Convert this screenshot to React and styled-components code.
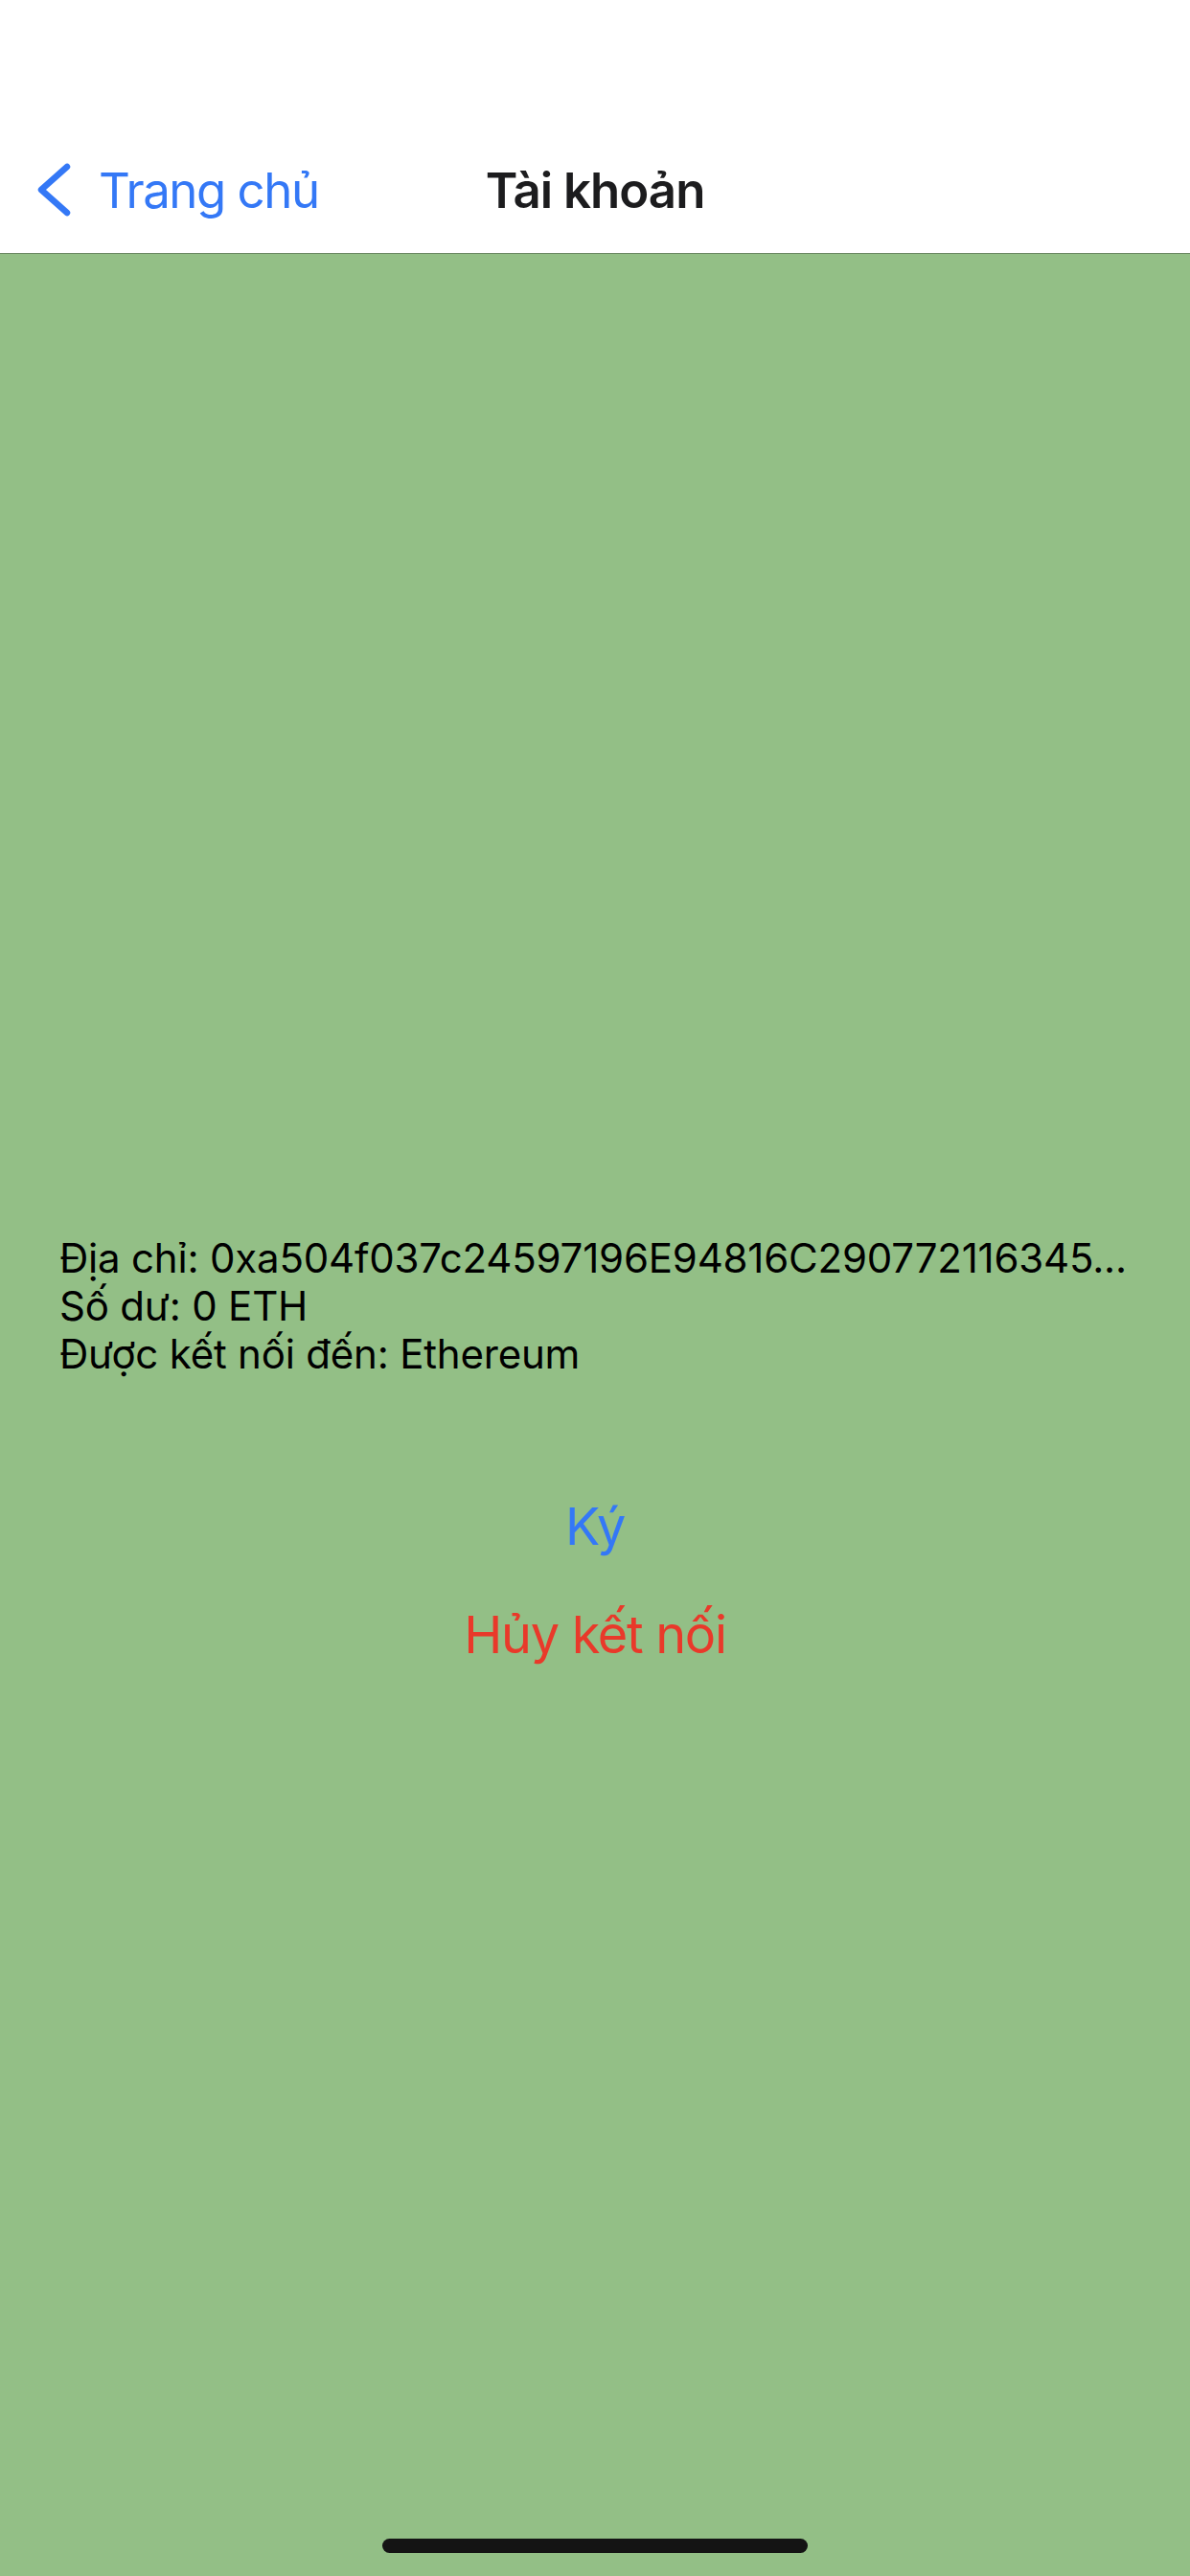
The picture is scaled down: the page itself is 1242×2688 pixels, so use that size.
import React from "react";
import styled, { createGlobalStyle } from "styled-components";

const GlobalStyle = createGlobalStyle`
  html, body { margin: 0; padding: 0; }
  body { font-family: "Inter", "Noto Sans", sans-serif; background: #93bf86; }
  #root { min-height: 100vh; }
`;

const Screen = styled.div`
  min-height: 100vh;
  display: flex;
  flex-direction: column;
  background: #93bf86;
`;

const Header = styled.header`
  background: #ffffff;
  padding-top: 132px;
  border-bottom: 1px solid #6b8862;
`;

const NavBar = styled.nav`
  height: 132px;
  display: grid;
  grid-template-columns: 1fr auto 1fr;
  align-items: center;
`;

const BackButton = styled.div`
  display: flex;
  align-items: center;
  gap: 29px;
  padding-left: 37px;
  color: #3478f6;
  font-size: 51px;
  letter-spacing: -1.5px;
`;

const Title = styled.h1`
  margin: 0;
  font-size: 51px;
  font-weight: 600;
  color: #1c1c1e;
  letter-spacing: -1px;
`;

const Body = styled.main`
  flex: 1;
  display: flex;
  flex-direction: column;
  padding-top: 1023px;
`;

const Info = styled.div`
  padding: 0 62px;
  display: flex;
  flex-direction: column;
`;

const InfoLine = styled.div`
  font-size: 42px;
  line-height: 50px;
  color: #000;
  white-space: nowrap;
  letter-spacing: -0.2px;
`;

const Actions = styled.div`
  margin-top: 98px;
  display: flex;
  flex-direction: column;
  align-items: center;
`;

const ActionButton = styled.button`
  border: 0;
  background: transparent;
  padding: 24px;
  font-family: inherit;
  font-size: 54px;
  line-height: 65px;
  letter-spacing: -1.3px;
  color: ${(p) => (p.$danger ? "#e9392a" : "#3478f6")};
  cursor: pointer;
`;

const HomeIndicator = styled.div`
  margin: auto auto 24px;
  width: 444px;
  height: 15px;
  border-radius: 8px;
  background: #141414;
`;

function Chevron() {
  return (
    <svg width="37" height="60" viewBox="0 0 37 60" aria-hidden="true">
      <path
        d="M33 6 L6 30 L33 54"
        fill="none"
        stroke="#3478f6"
        strokeWidth="6.5"
        strokeLinecap="round"
        strokeLinejoin="round"
      />
    </svg>
  );
}

export default function App() {
  return (
    <>
      <GlobalStyle />
      <Screen>
        <Header>
          <NavBar>
            <BackButton>
              <Chevron />
              <span>Trang chủ</span>
            </BackButton>
            <Title>Tài khoản</Title>
            <div />
          </NavBar>
        </Header>
        <Body>
          <Info>
            <InfoLine>Địa chỉ: 0xa504f037c24597196E94816C290772116345...</InfoLine>
            <InfoLine>Số dư: 0 ETH</InfoLine>
            <InfoLine>Được kết nối đến: Ethereum</InfoLine>
          </Info>
          <Actions>
            <ActionButton>Ký</ActionButton>
            <ActionButton $danger>Hủy kết nối</ActionButton>
          </Actions>
          <HomeIndicator />
        </Body>
      </Screen>
    </>
  );
}
